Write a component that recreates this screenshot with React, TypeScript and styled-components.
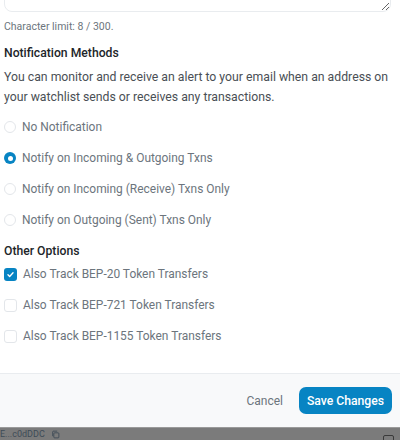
import React from "react";
import styled, { createGlobalStyle } from "styled-components";

const Global = createGlobalStyle`
  html, body { margin: 0; padding: 0; background: #fff; }
  body { font-family: Roboto, "Liberation Sans", sans-serif; width: 400px; height: 440px; overflow: hidden; }
  * { box-sizing: border-box; }
`;

const Page = styled.div`
  width: 400px;
  height: 440px;
  display: flex;
  flex-direction: column;
  overflow: hidden;
`;

const Body = styled.div`
  padding: 0 8px 0 4px;
  display: flex;
  flex-direction: column;
  height: 373px;
`;

const TextareaClip = styled.div`
  height: 12px;
  overflow: hidden;
  display: flex;
  align-items: flex-end;
`;

const TextArea = styled.textarea`
  width: 387px;
  height: 60px;
  flex-shrink: 0;
  border: 1px solid #e9ecef;
  border-radius: 8px;
  resize: vertical;
  font-family: inherit;
  outline: none;
  background: #fff;
`;

const Hint = styled.div`
  margin-top: 8px;
  font-size: 10.5px;
  line-height: 14px;
  color: #6c757d;
`;

const SectionTitle = styled.div<{ $mt: number }>`
  margin-top: ${(p) => p.$mt}px;
  font-size: 12.2px;
  line-height: 18px;
  font-weight: 500;
  color: #212529;
`;

const Para = styled.p`
  margin: 5px 0 0;
  font-size: 12.25px;
  line-height: 20px;
  color: #4a4f55;
`;

const OptionList = styled.div<{ $mt: number }>`
  margin-top: ${(p) => p.$mt}px;
  display: flex;
  flex-direction: column;
  gap: 13px;
`;

const Option = styled.label`
  display: flex;
  align-items: center;
  gap: 6px;
  height: 18px;
  font-size: 11.95px;
  color: #6c757d;
`;

const RadioMark = styled.span<{ $on?: boolean }>`
  width: 12px;
  height: 12px;
  border-radius: 50%;
  flex-shrink: 0;
  border: ${(p) => (p.$on ? "none" : "1px solid #e3e6ea")};
  background: ${(p) => (p.$on ? "#0784c3" : "#fff")};
  display: flex;
  align-items: center;
  justify-content: center;
  &::after {
    content: "";
    display: ${(p) => (p.$on ? "block" : "none")};
    width: 5px;
    height: 5px;
    border-radius: 50%;
    background: #fff;
  }
`;

const CheckMark = styled.span<{ $on?: boolean }>`
  width: 13px;
  height: 13px;
  border-radius: 3px;
  flex-shrink: 0;
  border: ${(p) => (p.$on ? "none" : "1px solid #e3e6ea")};
  background: ${(p) => (p.$on ? "#0784c3" : "#fff")};
  display: flex;
  align-items: center;
  justify-content: center;
`;

const Footer = styled.div`
  height: 54px;
  border-top: 1px solid #e9ecef;
  background: #f8f9fa;
  display: flex;
  align-items: center;
  justify-content: flex-end;
  gap: 16px;
  padding: 0 8px 0 0;
`;

const CancelBtn = styled.button`
  border: none;
  background: none;
  font-family: inherit;
  font-size: 12px;
  color: #6c757d;
  padding: 0;
  cursor: pointer;
`;

const SaveBtn = styled.button`
  border: none;
  background: #0784c3;
  color: #fff;
  font-family: inherit;
  font-size: 12.2px;
  font-weight: 500;
  height: 27px;
  width: 93px;
  border-radius: 7px;
  padding: 0;
  cursor: pointer;
`;

const Backdrop = styled.div`
  flex: 1;
  background: #7b7b7b;
  border-top: 1px solid #9a9a9a;
  display: flex;
  align-items: flex-start;
  justify-content: space-between;
  padding: 1px 6px 0 0;
  overflow: hidden;
`;

const BackText = styled.span`
  font-size: 9px;
  line-height: 10px;
  color: #3e4b57;
  display: flex;
  align-items: center;
  gap: 6px;
`;

const BackIcon = styled.span`
  width: 11px;
  height: 11px;
  border: 1.5px solid #3a3a3a;
  border-radius: 2px;
  margin-top: 6px;
`;

const Check = () => (
  <svg width="9" height="9" viewBox="0 0 16 16">
    <path d="M3.5 8.5l3 3 6-6.5" fill="none" stroke="#fff" strokeWidth="2.4" strokeLinecap="round" strokeLinejoin="round" />
  </svg>
);

const CopyIcon = () => (
  <svg width="9" height="9" viewBox="0 0 16 16">
    <rect x="5" y="5" width="9" height="9" rx="1.5" fill="none" stroke="#3e4b57" strokeWidth="1.6" />
    <path d="M3 11V3.5A1.5 1.5 0 0 1 4.5 2H11" fill="none" stroke="#3e4b57" strokeWidth="1.6" />
  </svg>
);

const radios = [
  { label: "No Notification", on: false },
  { label: "Notify on Incoming & Outgoing Txns", on: true },
  { label: "Notify on Incoming (Receive) Txns Only", on: false },
  { label: "Notify on Outgoing (Sent) Txns Only", on: false },
];

const checks = [
  { label: "Also Track BEP-20 Token Transfers", on: true },
  { label: "Also Track BEP-721 Token Transfers", on: false },
  { label: "Also Track BEP-1155 Token Transfers", on: false },
];

export default function App() {
  return (
    <Page>
      <Global />
      <Body>
        <TextareaClip>
          <TextArea defaultValue="" />
        </TextareaClip>
        <Hint>Character limit: 8 / 300.</Hint>
        <SectionTitle $mt={10}>Notification Methods</SectionTitle>
        <Para>
          You can monitor and receive an alert to your email when an address on your watchlist sends or receives any
          transactions.
        </Para>
        <OptionList $mt={11}>
          {radios.map((r) => (
            <Option key={r.label}>
              <RadioMark $on={r.on} />
              {r.label}
            </Option>
          ))}
        </OptionList>
        <SectionTitle $mt={13}>Other Options</SectionTitle>
        <OptionList $mt={5}>
          {checks.map((c) => (
            <Option key={c.label}>
              <CheckMark $on={c.on}>{c.on && <Check />}</CheckMark>
              {c.label}
            </Option>
          ))}
        </OptionList>
      </Body>
      <Footer>
        <CancelBtn>Cancel</CancelBtn>
        <SaveBtn>Save Changes</SaveBtn>
      </Footer>
      <Backdrop>
        <BackText>
          E...c0dDDC <CopyIcon />
        </BackText>
        <BackIcon />
      </Backdrop>
    </Page>
  );
}
